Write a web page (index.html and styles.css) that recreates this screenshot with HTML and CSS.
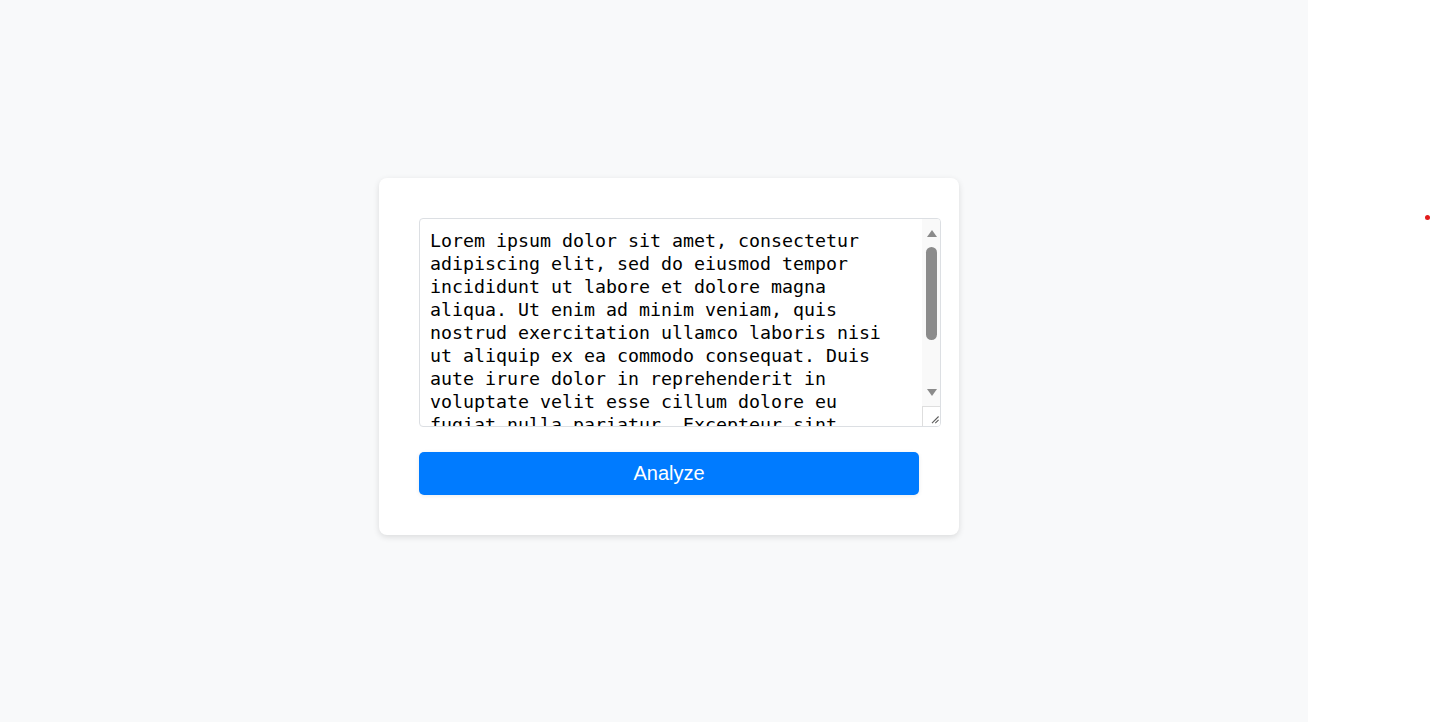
FILE: index.html
```html
<!DOCTYPE html>
<html lang="en">
<head>
<meta charset="utf-8">
<title>Analyze</title>
<link rel="stylesheet" href="styles.css">
</head>
<body>
<div class="page">
  <main class="stage">
    <div class="card">
      <div class="field">
        <textarea class="input">Lorem ipsum dolor sit amet, consectetur adipiscing elit, sed do eiusmod tempor incididunt ut labore et dolore magna aliqua. Ut enim ad minim veniam, quis nostrud exercitation ullamco laboris nisi ut aliquip ex ea commodo consequat. Duis aute irure dolor in reprehenderit in voluptate velit esse cillum dolore eu fugiat nulla pariatur. Excepteur sint occaecat cupidatat non proident, sunt in culpa qui officia deserunt mollit anim id est laborum.</textarea>
        <div class="scrollbar">
          <div class="sb-btn"><span class="arrow-up"></span></div>
          <div class="sb-track"><div class="sb-thumb"></div></div>
          <div class="sb-btn"><span class="arrow-down"></span></div>
          <div class="sb-resizer">
            <svg width="18" height="19" viewBox="0 0 18 19">
              <path d="M16.5 9.5 L9.5 16.5 M16.5 13 L13 16.5" stroke="#5f5f5f" stroke-width="1.2" fill="none"/>
            </svg>
          </div>
        </div>
      </div>
      <button class="analyze">Analyze</button>
    </div>
  </main>
  <aside class="side">
    <span class="dot"></span>
  </aside>
</div>
</body>
</html>
```

FILE: styles.css
```css
html, body {
  margin: 0;
  padding: 0;
  height: 100%;
}
body {
  background: #ffffff;
  font-family: "Liberation Sans", Arial, sans-serif;
  overflow: hidden;
}
.page {
  display: flex;
  height: 722px;
}
.stage {
  width: 1308px;
  flex: none;
  background: #f8f9fa;
  display: flex;
  align-items: center;
  justify-content: center;
  padding: 0 0 9px 30px;
  box-sizing: border-box;
}
.card {
  width: 580px;
  box-sizing: border-box;
  padding: 40px;
  background: #ffffff;
  border-radius: 8px;
  box-shadow: 0 2px 6px rgba(0, 0, 0, 0.12);
}
.field {
  display: flex;
  width: 522px;
  height: 209px;
  box-sizing: border-box;
  margin: 0 0 25px 0;
  border: 1px solid #dcdfe3;
  border-radius: 4px;
  overflow: hidden;
  background: #ffffff;
}
.input {
  flex: 1;
  min-width: 0;
  margin: 0;
  padding: 10px;
  border: none;
  font-family: "DejaVu Sans Mono", monospace;
  font-size: 18.27px;
  line-height: 23px;
  color: #000000;
  resize: none;
  outline: none;
  overflow: hidden;
  background: transparent;
}
.scrollbar {
  width: 18px;
  flex: none;
  display: flex;
  flex-direction: column;
  background: #f9f9f9;
}
.sb-btn {
  height: 27px;
  flex: none;
  display: flex;
  align-items: center;
  justify-content: center;
}
.sb-btn:first-child {
  height: 28px;
  padding-top: 1px;
  box-sizing: border-box;
}
.arrow-up {
  width: 0;
  height: 0;
  border-left: 5.5px solid transparent;
  border-right: 5.5px solid transparent;
  border-bottom: 7px solid #8b8b8b;
  margin-left: 1px;
}
.arrow-down {
  width: 0;
  height: 0;
  border-left: 5.5px solid transparent;
  border-right: 5.5px solid transparent;
  border-top: 7px solid #8b8b8b;
  margin-left: 1px;
}
.sb-track {
  flex: 1;
  display: flex;
  flex-direction: column;
  align-items: center;
}
.sb-thumb {
  width: 11px;
  height: 93px;
  margin-left: 1px;
  border-radius: 6px;
  background: #8b8b8b;
}
.sb-resizer {
  height: 19px;
  flex: none;
  border-top: 1px solid #dedede;
  border-left: 1px solid #dedede;
  background: #ffffff;
  display: flex;
  justify-content: flex-end;
  align-items: flex-end;
}
.sb-resizer svg {
  display: block;
}
.analyze {
  display: block;
  width: 500px;
  height: 43px;
  border: none;
  border-radius: 5px;
  background: #007bff;
  color: #ffffff;
  font-family: "Liberation Sans", Arial, sans-serif;
  font-size: 20px;
  padding: 0;
  cursor: pointer;
  box-shadow: 0 1px 4px rgba(0, 0, 0, 0.08);
}
.side {
  flex: 1;
  background: #ffffff;
  padding-top: 215px;
  display: flex;
  justify-content: flex-end;
  align-items: flex-start;
  padding-right: 1px;
}
.dot {
  width: 5px;
  height: 5px;
  border-radius: 50%;
  background: #e21b1b;
}
```
